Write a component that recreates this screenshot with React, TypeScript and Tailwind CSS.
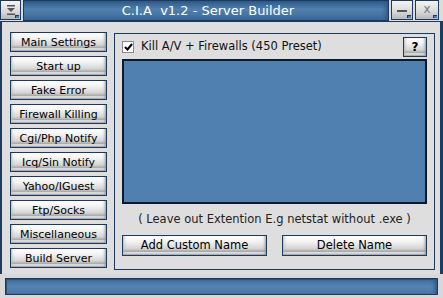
const font = { fontFamily: '"DejaVu Sans", Verdana, sans-serif' };

const metal =
  "border border-[#1d3a5c] bg-[linear-gradient(to_bottom,#ffffff_0%,#f2f2f2_30%,#d6d6d6_65%,#a8a8a8_82%,#ececec_88%,#9c9c9c_100%)] shadow-[inset_3px_0_3px_-2px_#b8b8b8,inset_-3px_0_3px_-2px_#909090] text-black flex items-center justify-center leading-none";

const menu = [
  "Main Settings",
  "Start up",
  "Fake Error",
  "Firewall Killing",
  "Cgi/Php Notify",
  "Icq/Sin Notify",
  "Yahoo/IGuest",
  "Ftp/Socks",
  "Miscellaneous",
  "Build Server",
];

function Corner() {
  return <span className="absolute bottom-[1px] right-[1px] w-[4px] h-[3px] bg-[#4f80af] border-t border-l border-[#1d3a5c]" />;
}

function WinButton({ children, w }: { children: React.ReactNode; w: string }) {
  return (
    <div className={`relative ${w} h-[20px] border border-[#1d3a5c] bg-[linear-gradient(to_bottom,#f4f4f4,#d8d8d8_60%,#b8b8b8)] flex items-center justify-center`}>
      {children}
      <Corner />
    </div>
  );
}

export default function App() {
  return (
    <div className="w-[443px] h-[298px] bg-[#1d3c60] flex flex-col overflow-hidden" style={font}>
      {/* title bar */}
      <div className="h-[21px] flex gap-[2px] bg-[#dcdcdc]">
        <WinButton w="w-[21px]">
          <svg width="12" height="12" viewBox="0 0 12 12">
            <rect x="2" y="1" width="8" height="1.5" fill="#555" />
            <path d="M2 4 H10 L6 8 Z" fill="#555" />
            <rect x="2" y="9.5" width="8" height="1.5" fill="#555" />
          </svg>
        </WinButton>
        <div className="flex-1 border border-[#1d3a5c] bg-[linear-gradient(to_bottom,#2f5a88,#5080ae_45%,#4775a4_70%,#3a6794)] shadow-[inset_-4px_0_4px_-2px_#2c5580] flex items-center justify-center text-white text-[13px] whitespace-pre pl-[4px]">
          C.I.A  v1.2 - Server Builder
        </div>
        <WinButton w="w-[22px]">
          <span className="block w-[10px] h-[2px] bg-[#555] mt-[1px]" />
        </WinButton>
        <WinButton w="w-[24px]">
          <span className="text-[12px] text-[#777] leading-none -mt-[3px]">x</span>
        </WinButton>
        <div className="w-[2px]" />
      </div>

      {/* body */}
      <div className="flex-1 ml-[2px] mr-[3px] bg-[#dedede] flex text-[11px] border-t border-[#1d3a5c]">
        <div className="flex flex-col gap-[4px] pl-[8px] pt-[10px] w-[112px]">
          {menu.map((m) => (
            <div key={m} className={`${metal} w-[97px] h-[20px] text-[11px]`}>
              {m}
            </div>
          ))}
        </div>

        <div className="mt-[11px] mb-[4px] w-[321px] border border-[#1d3a5c] flex flex-col px-[7px]">
          <div className="flex items-center justify-between h-[23px] mt-[1px]">
            <div className="flex items-center gap-[7px]">
              <div className="w-[12px] h-[12px] bg-white border border-[#8a8a8a] flex items-center justify-center">
                <svg width="9" height="8" viewBox="0 0 9 8">
                  <path d="M1 4 L3.5 6.5 L8 1" stroke="#000" strokeWidth="2" fill="none" />
                </svg>
              </div>
              <span className="text-[#111] text-[11.5px]">Kill A/V + Firewalls (450 Preset)</span>
            </div>
            <div className={`${metal} w-[24px] h-[20px] text-[12px] font-bold`}>?</div>
          </div>
          <div className="mt-[1px] h-[145px] bg-[#4f80af] border-2 border-[#0e1a28]" />
          <div className="h-[31px] flex items-center justify-center text-[#222] text-[11.5px] whitespace-pre">
            ( Leave out Extention E.g netstat without .exe )
          </div>
          <div className="flex justify-between">
            <div className={`${metal} w-[145px] h-[21px] text-[11.5px]`}>Add Custom Name</div>
            <div className={`${metal} w-[145px] h-[21px] text-[11.5px]`}>Delete Name</div>
          </div>
        </div>
      </div>

      {/* status */}
      <div className="h-[24px] bg-[#d8d8d8] px-[5px] pt-[4px] pb-[3px]">
        <div className="h-full border border-[#1d3a5c] bg-[linear-gradient(to_bottom,#3e6c9a,#5684b2_50%,#4a78a6)] shadow-[inset_1px_1px_0_#2a5078,inset_-4px_0_4px_-2px_#2c5580]" />
      </div>
    </div>
  );
}
